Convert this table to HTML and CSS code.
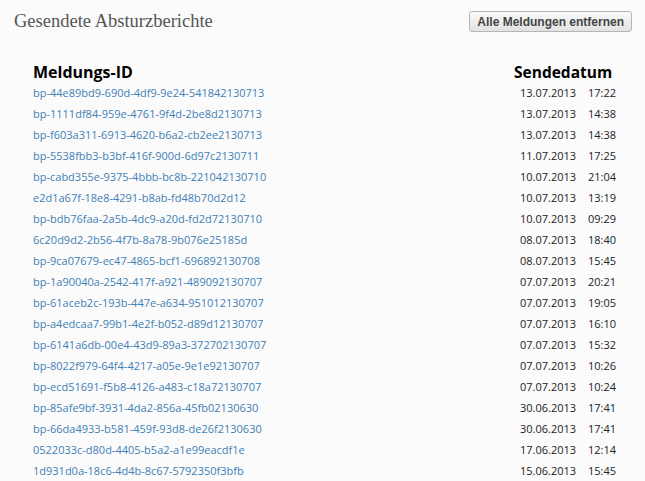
FILE: index.html
```html
<!DOCTYPE html>
<html lang="de">
<head>
<meta charset="utf-8">
<title>Gesendete Absturzberichte</title>
<link rel="stylesheet" href="styles.css">
</head>
<body>
<div class="page">
  <div class="topbar">
    <h1 class="title">Gesendete Absturzberichte</h1>
    <button class="clear-btn" type="button">Alle Meldungen entfernen</button>
  </div>
  <table class="reports">
    <thead>
      <tr><th class="col-id">Meldungs-ID</th><th class="col-date">Sendedatum</th></tr>
    </thead>
    <tbody>
      <tr><td><a href="#">bp-44e89bd9-690d-4df9-9e24-541842130713</a></td><td class="date"><span class="d">13.07.2013</span><span class="t">17:22</span></td></tr>
      <tr><td><a href="#">bp-1111df84-959e-4761-9f4d-2be8d2130713</a></td><td class="date"><span class="d">13.07.2013</span><span class="t">14:38</span></td></tr>
      <tr><td><a href="#">bp-f603a311-6913-4620-b6a2-cb2ee2130713</a></td><td class="date"><span class="d">13.07.2013</span><span class="t">14:38</span></td></tr>
      <tr><td><a href="#">bp-5538fbb3-b3bf-416f-900d-6d97c2130711</a></td><td class="date"><span class="d">11.07.2013</span><span class="t">17:25</span></td></tr>
      <tr><td><a href="#">bp-cabd355e-9375-4bbb-bc8b-221042130710</a></td><td class="date"><span class="d">10.07.2013</span><span class="t">21:04</span></td></tr>
      <tr><td><a href="#">e2d1a67f-18e8-4291-b8ab-fd48b70d2d12</a></td><td class="date"><span class="d">10.07.2013</span><span class="t">13:19</span></td></tr>
      <tr><td><a href="#">bp-bdb76faa-2a5b-4dc9-a20d-fd2d72130710</a></td><td class="date"><span class="d">10.07.2013</span><span class="t">09:29</span></td></tr>
      <tr><td><a href="#">6c20d9d2-2b56-4f7b-8a78-9b076e25185d</a></td><td class="date"><span class="d">08.07.2013</span><span class="t">18:40</span></td></tr>
      <tr><td><a href="#">bp-9ca07679-ec47-4865-bcf1-696892130708</a></td><td class="date"><span class="d">08.07.2013</span><span class="t">15:45</span></td></tr>
      <tr><td><a href="#">bp-1a90040a-2542-417f-a921-489092130707</a></td><td class="date"><span class="d">07.07.2013</span><span class="t">20:21</span></td></tr>
      <tr><td><a href="#">bp-61aceb2c-193b-447e-a634-951012130707</a></td><td class="date"><span class="d">07.07.2013</span><span class="t">19:05</span></td></tr>
      <tr><td><a href="#">bp-a4edcaa7-99b1-4e2f-b052-d89d12130707</a></td><td class="date"><span class="d">07.07.2013</span><span class="t">16:10</span></td></tr>
      <tr><td><a href="#">bp-6141a6db-00e4-43d9-89a3-372702130707</a></td><td class="date"><span class="d">07.07.2013</span><span class="t">15:32</span></td></tr>
      <tr><td><a href="#">bp-8022f979-64f4-4217-a05e-9e1e92130707</a></td><td class="date"><span class="d">07.07.2013</span><span class="t">10:26</span></td></tr>
      <tr><td><a href="#">bp-ecd51691-f5b8-4126-a483-c18a72130707</a></td><td class="date"><span class="d">07.07.2013</span><span class="t">10:24</span></td></tr>
      <tr><td><a href="#">bp-85afe9bf-3931-4da2-856a-45fb02130630</a></td><td class="date"><span class="d">30.06.2013</span><span class="t">17:41</span></td></tr>
      <tr><td><a href="#">bp-66da4933-b581-459f-93d8-de26f2130630</a></td><td class="date"><span class="d">30.06.2013</span><span class="t">17:41</span></td></tr>
      <tr><td><a href="#">0522033c-d80d-4405-b5a2-a1e99eacdf1e</a></td><td class="date"><span class="d">17.06.2013</span><span class="t">12:14</span></td></tr>
      <tr><td><a href="#">1d931d0a-18c6-4d4b-8c67-5792350f3bfb</a></td><td class="date"><span class="d">15.06.2013</span><span class="t">15:45</span></td></tr>
    </tbody>
  </table>
</div>
</body>
</html>
```
FILE: styles.css
```css
html, body {
  margin: 0;
  padding: 0;
  background: #fbfbfb;
}

body {
  font-family: "Open Sans", "Noto Sans", sans-serif;
  color: #222;
}

.page {
  padding: 0 13px 0 14px;
}

.topbar {
  display: flex;
  justify-content: space-between;
  align-items: flex-start;
  padding-top: 8px;
}

.title {
  margin: 0;
  font-family: "Liberation Serif", "DejaVu Serif", serif;
  font-weight: normal;
  font-size: 18.5px;
  line-height: 26px;
  color: #555;
}

.clear-btn {
  margin-top: 3px;
  height: 21px;
  padding: 0 7px;
  font-family: "Liberation Sans", Arial, sans-serif;
  font-weight: bold;
  font-size: 12px;
  color: #444;
  border: 1px solid #b5b5b5;
  border-radius: 3px;
  background: linear-gradient(#fafafa, #e2e2e2);
}

.reports {
  margin-left: 19px;
  margin-top: 28px;
  border-collapse: collapse;
}

.reports th {
  font-size: 16px;
  font-weight: bold;
  color: #000;
  line-height: 20px;
  padding: 0;
  text-align: left;
}

.col-id {
  width: 481px;
}

.col-date {
  font-size: 15.5px !important;
}

.reports td {
  padding: 0;
  height: 21px;
  font-size: 11px;
  line-height: 21px;
}

.reports a {
  color: #3f7fb6;
  text-decoration: none;
}

.date {
  padding-left: 6px !important;
  white-space: nowrap;
}

.date .d {
  display: inline-block;
  width: 68px;
}
```
